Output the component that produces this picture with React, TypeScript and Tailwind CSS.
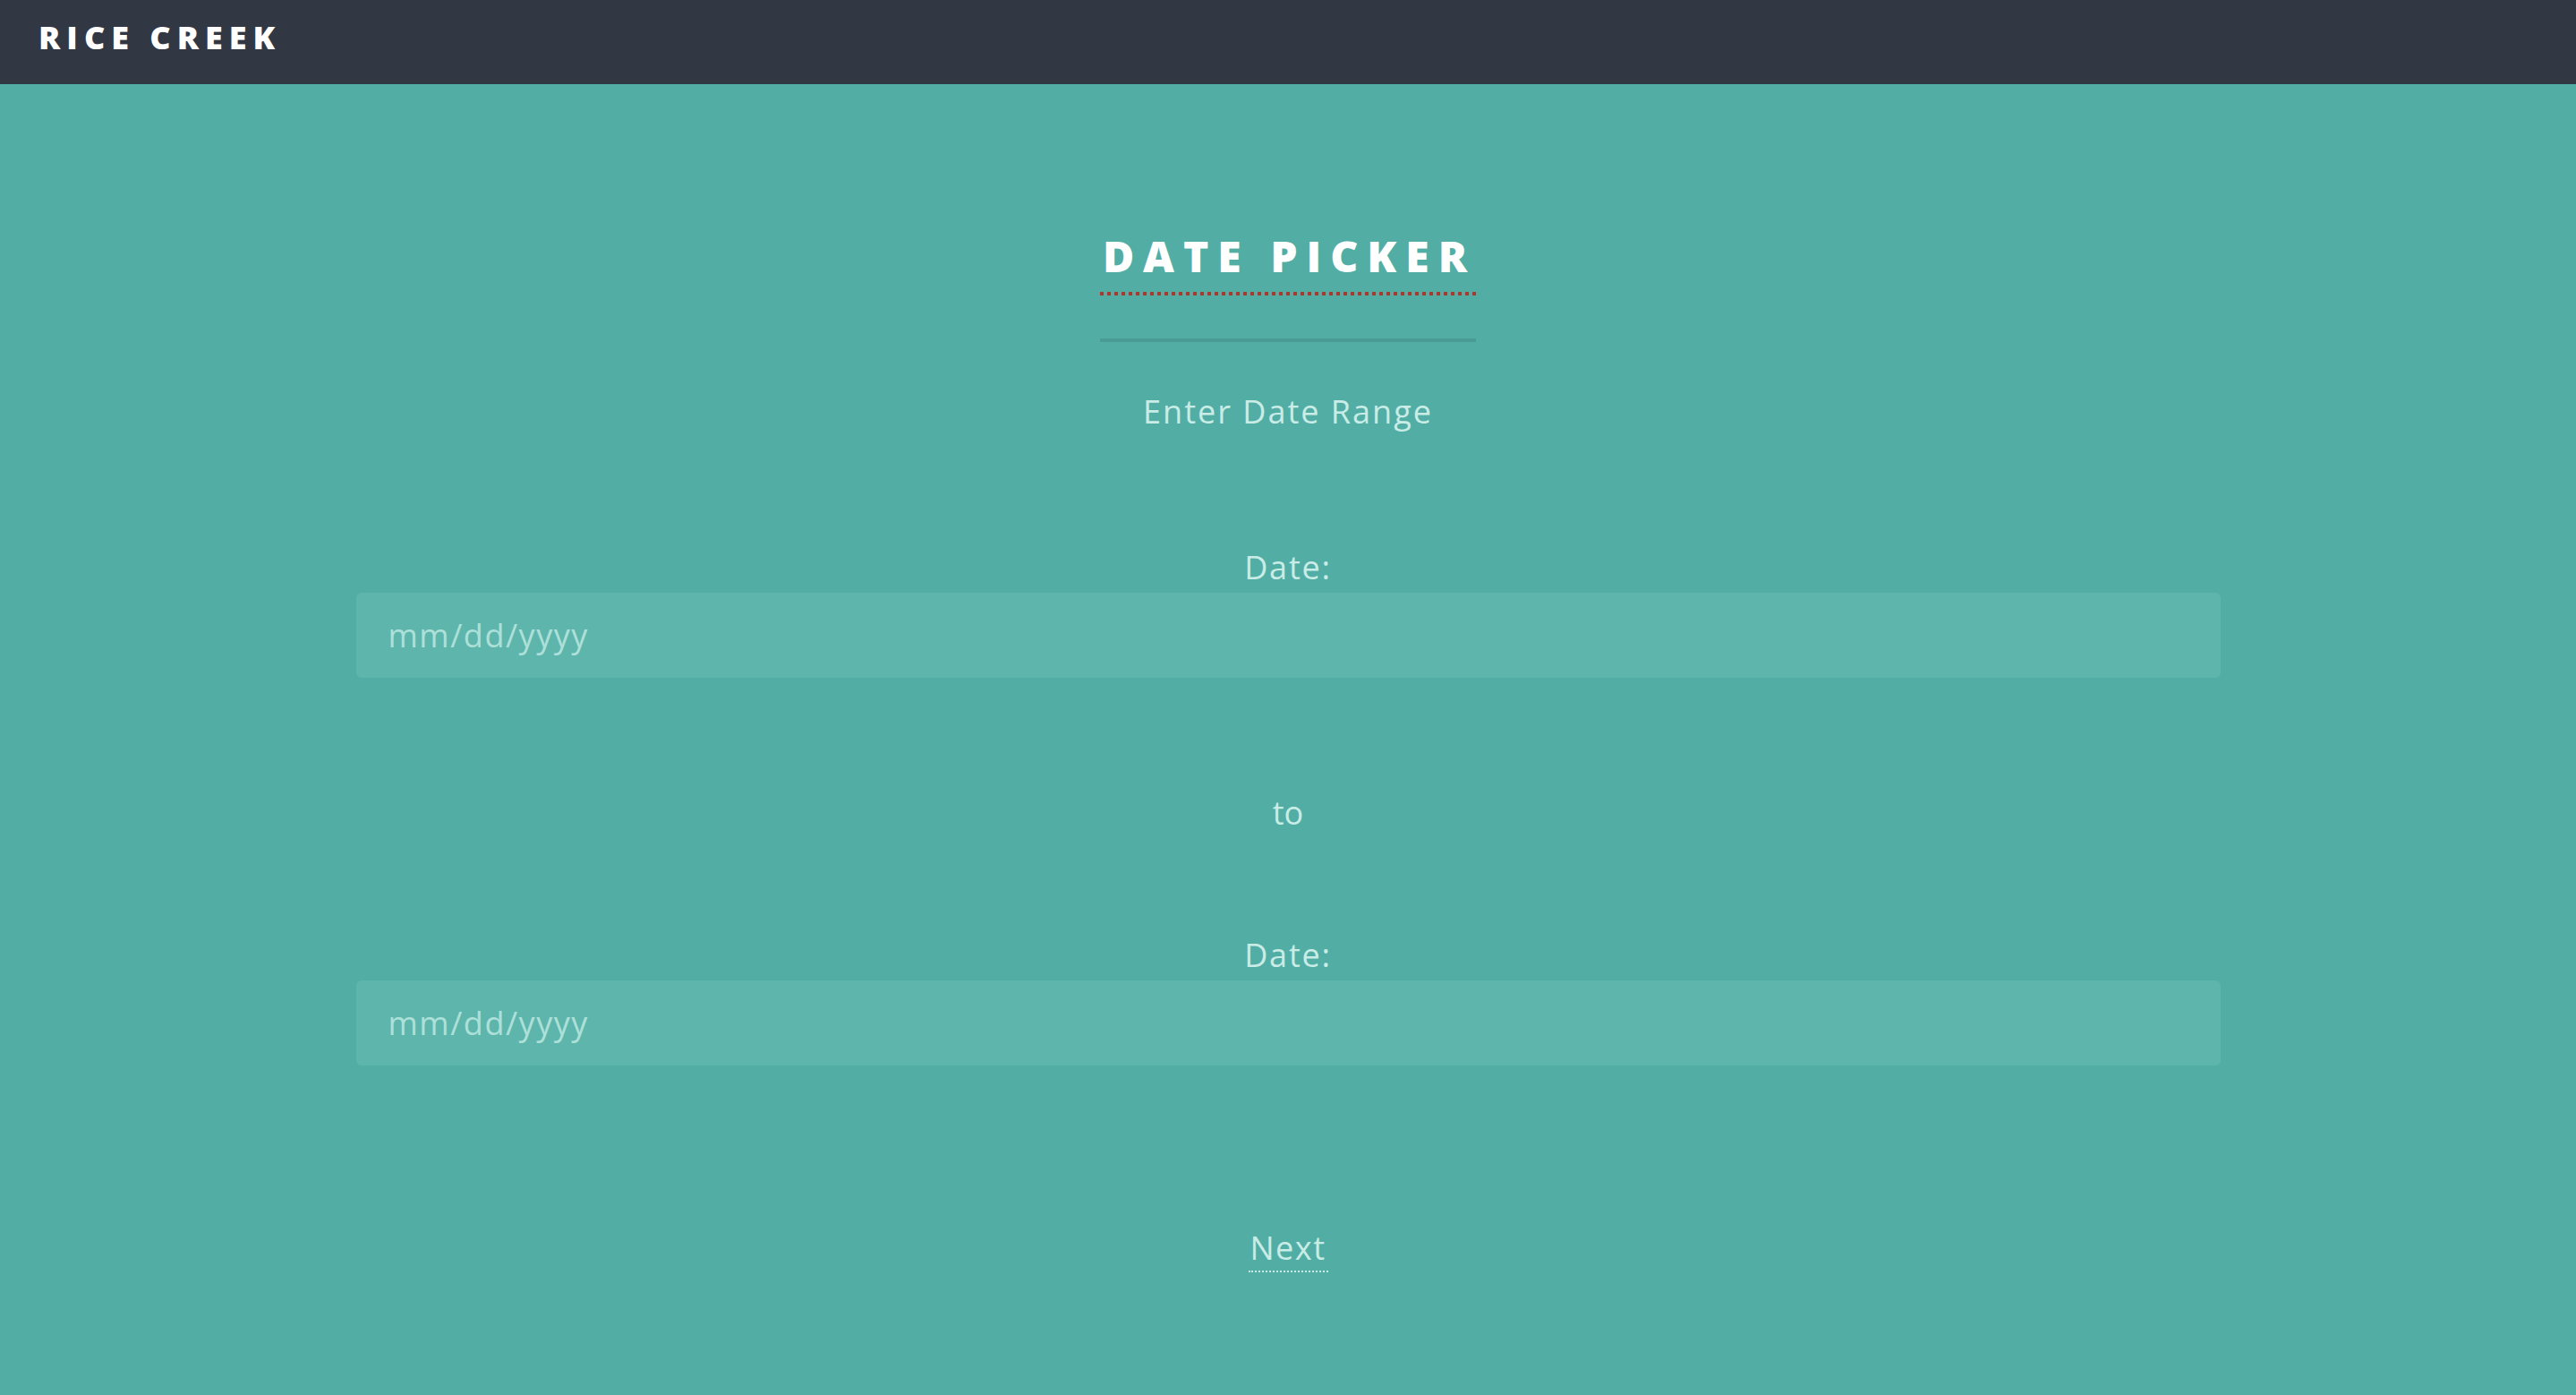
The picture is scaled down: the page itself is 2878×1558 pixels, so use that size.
export default function App() {
  return (
    <div className="min-h-screen flex flex-col bg-[#52aea5] font-['Open_Sans',sans-serif]">
      {/* Top bar */}
      <header className="h-[94px] bg-[#313843] px-[43px] pt-[24px]">
        <span className="text-[36px] leading-none font-extrabold tracking-[7px] text-white">
          RICE CREEK
        </span>
      </header>

      <main className="flex-1 flex flex-col items-center text-[#c9ece7]">
        <div className="mt-[168px] inline-flex flex-col">
          <h1 className="text-[48px] leading-none font-extrabold tracking-[10px] text-white pl-[3px]">
            DATE PICKER
          </h1>
          <div className="mt-[16px] h-1 w-full bg-[repeating-linear-gradient(90deg,#b1332c_0_4px,transparent_4px_8px)]" />
          <div className="mt-[48px] h-1 w-full bg-[#4a9b93]" />
        </div>

        <p className="mt-[60px] text-[36px] leading-none tracking-[2px]">Enter Date Range</p>

        <label className="mt-[138px] text-[36px] leading-none tracking-[1.8px]">Date:</label>
        <input
          type="text"
          placeholder="mm/dd/yyyy"
          className="mt-[10px] w-[2083px] h-[95px] rounded-[6px] bg-[#5eb5ac] px-[36px] text-[36px] tracking-[1.5px] text-white outline-none placeholder:text-[#ade0d9]"
        />

        <p className="mt-[133px] text-[36px] leading-none">to</p>

        <label className="mt-[123px] text-[36px] leading-none tracking-[1.8px]">Date:</label>
        <input
          type="text"
          placeholder="mm/dd/yyyy"
          className="mt-[10px] w-[2083px] h-[95px] rounded-[6px] bg-[#5eb5ac] px-[36px] text-[36px] tracking-[1.5px] text-white outline-none placeholder:text-[#ade0d9]"
        />

        <a
          href="#"
          className="mt-[186px] inline-block px-[2px] text-[36px] leading-none tracking-[1.5px] pb-[7px] border-b-2 border-dotted border-[#c9ece7]"
        >
          Next
        </a>
      </main>
    </div>
  );
}
